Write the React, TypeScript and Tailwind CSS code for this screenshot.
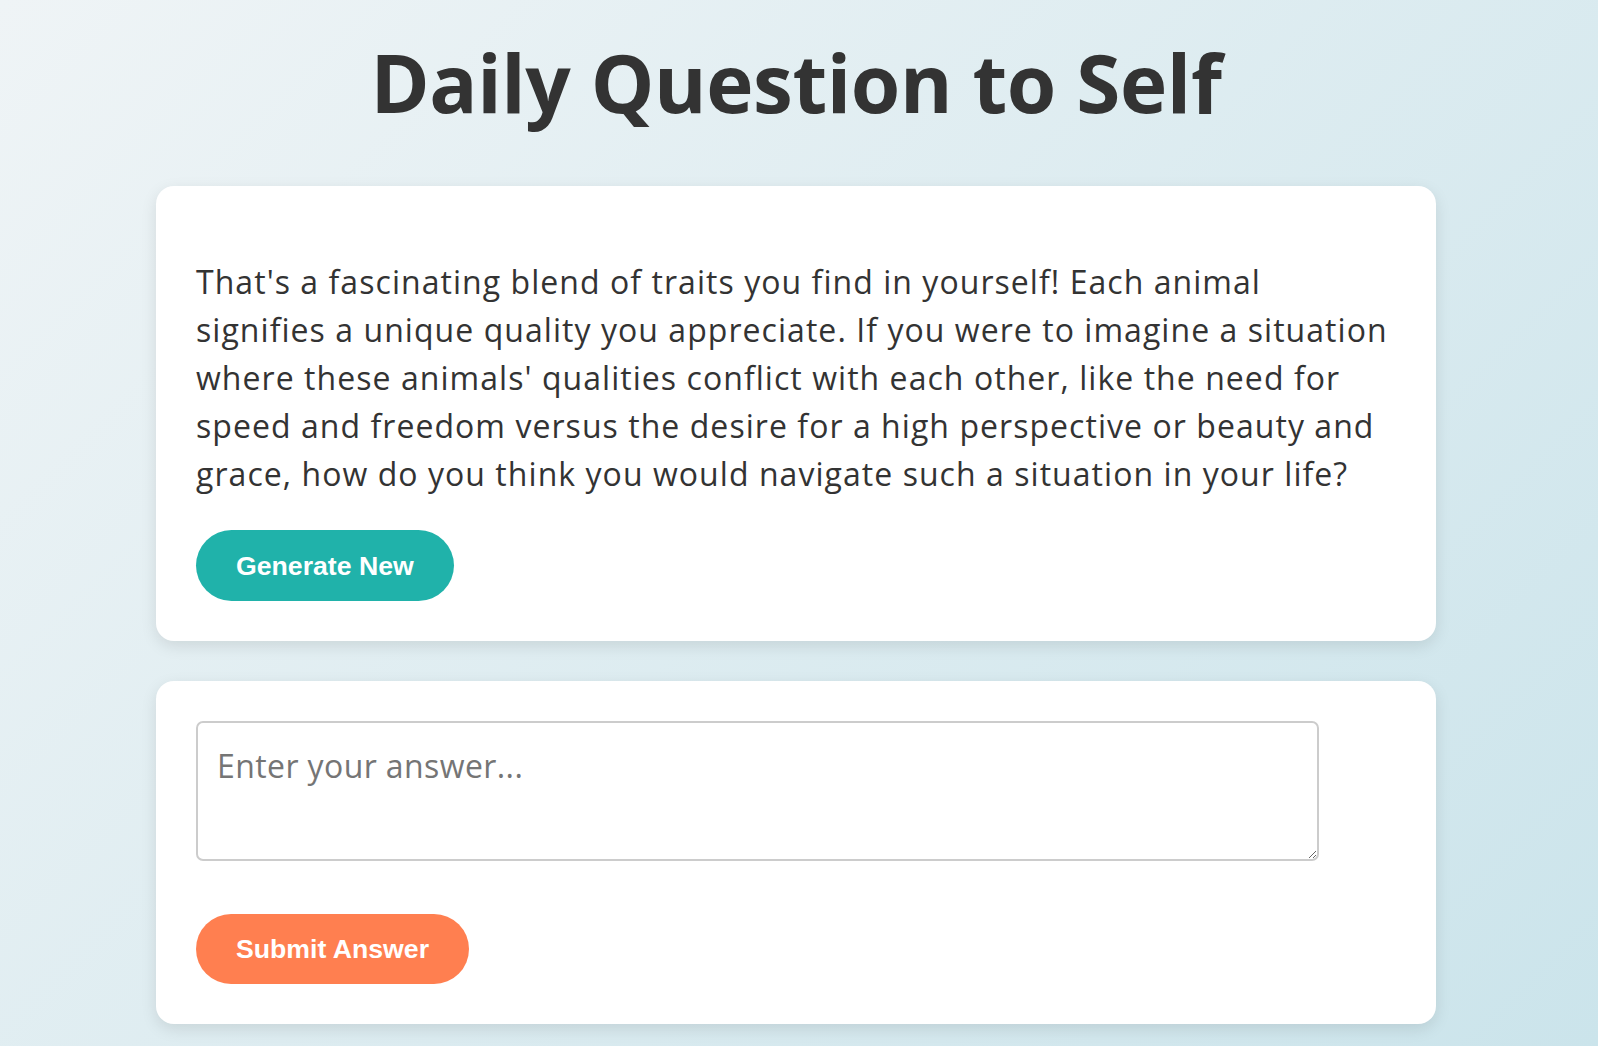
import { useState } from "react";

const question =
  "That's a fascinating blend of traits you find in yourself! Each animal signifies a unique quality you appreciate. If you were to imagine a situation where these animals' qualities conflict with each other, like the need for speed and freedom versus the desire for a high perspective or beauty and grace, how do you think you would navigate such a situation in your life?";

export default function App() {
  const [answer, setAnswer] = useState("");

  return (
    <div className="min-h-screen bg-[linear-gradient(135deg,#eff4f6_0%,#cbe4eb_100%)] font-['Open_Sans',sans-serif] text-[#333333]">
      <div className="flex flex-col items-center pr-[6px] pt-[34px]">
        <h1 className="text-[80px] leading-[96px] font-bold tracking-[-0.4px]">
          Daily Question to Self
        </h1>

        <div className="mt-[56px] flex w-[1280px] flex-col gap-10">
          {/* question card */}
          <div className="rounded-[18px] bg-white p-10 shadow-[0_5px_16px_rgba(0,0,0,0.1)]">
            <p className="my-8 text-[32px] leading-[48px] tracking-[1.05px]">
              {question}
            </p>
            <button
              type="button"
              className="h-[71px] rounded-full bg-[#20b2aa] px-10 font-['Liberation_Sans',Arial,sans-serif] text-[26.67px] leading-[30px] font-bold tracking-normal text-white"
            >
              Generate New
            </button>
          </div>

          {/* answer card */}
          <div className="flex flex-col items-start rounded-[18px] bg-white p-10 shadow-[0_5px_16px_rgba(0,0,0,0.1)]">
            <textarea
              value={answer}
              onChange={(e) => setAnswer(e.target.value)}
              placeholder="Enter your answer..."
              className="h-[140px] w-[1123px] rounded-[7px] border-2 border-[#cccccc] bg-white p-[19px] text-[32px] leading-[48px] tracking-[0.4px] outline-none placeholder:text-[#757575]"
            />
            <button
              type="button"
              className="mt-[53px] h-[70px] rounded-full bg-[#ff7f50] px-10 font-['Liberation_Sans',Arial,sans-serif] text-[26.67px] leading-[30px] font-bold tracking-normal text-white"
            >
              Submit Answer
            </button>
          </div>
        </div>
      </div>
    </div>
  );
}
